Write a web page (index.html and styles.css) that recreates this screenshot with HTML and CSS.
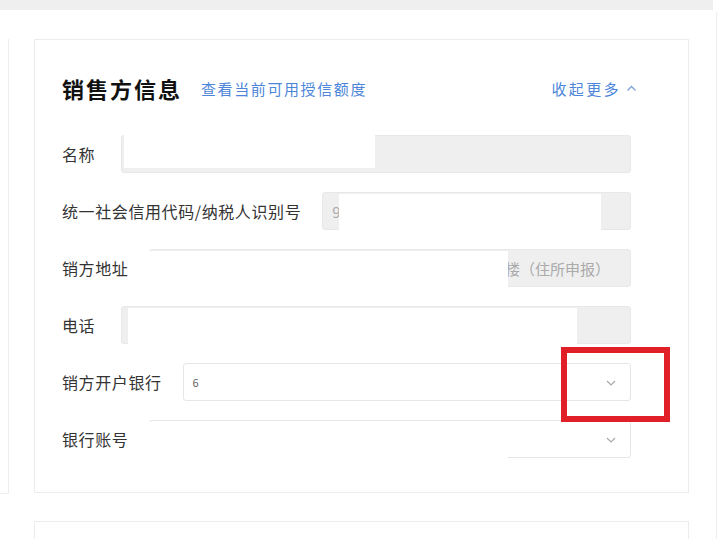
FILE: index.html
```html
<!DOCTYPE html>
<html lang="zh-CN">
<head>
  <meta charset="UTF-8">
  <title>销售方信息</title>
  <link rel="stylesheet" href="styles.css">
</head>
<body>
  <div class="topband"></div>
  <div class="layout">
    <div class="side"></div>

    <div class="main">
      <div class="card">
        <div class="card-header">
          <h2 class="card-title">销售方信息</h2>
          <a class="link" href="#">查看当前可用授信额度</a>
          <a class="link toggle" href="#">收起更多
            <svg width="11" height="7" viewBox="0 0 11 7"><path d="M1.5 5.5 L5.5 1.5 L9.5 5.5" fill="none" stroke="#7f9fd8" stroke-width="1.3"/></svg>
          </a>
        </div>

        <div class="form">
          <div class="form-row short">
            <label>名称</label>
            <div class="field disabled">
              <span class="mask mask-name"></span>
            </div>
          </div>

          <div class="form-row">
            <label>统一社会信用代码/纳税人识别号</label>
            <div class="field disabled">
              <span class="value">9</span>
              <span class="mask mask-tax"></span>
            </div>
          </div>

          <div class="form-row">
            <label>销方地址</label>
            <div class="field disabled end">
              <span class="value">楼（住所申报）</span>
              <span class="mask mask-addr"></span>
            </div>
          </div>

          <div class="form-row short">
            <label>电话</label>
            <div class="field disabled">
              <span class="mask mask-phone"></span>
            </div>
          </div>

          <div class="form-row">
            <label>销方开户银行</label>
            <div class="field select">
              <span class="value dark">6</span>
              <span class="mask mask-bank"></span>
              <svg class="arrow" width="10" height="6" viewBox="0 0 10 6"><path d="M1 1 L5 5 L9 1" fill="none" stroke="#a8a8a8" stroke-width="1.2"/></svg>
            </div>
          </div>

          <div class="form-row">
            <label>银行账号</label>
            <div class="field select">
              <span class="mask mask-account"></span>
              <svg class="arrow" width="10" height="6" viewBox="0 0 10 6"><path d="M1 1 L5 5 L9 1" fill="none" stroke="#a8a8a8" stroke-width="1.2"/></svg>
            </div>
          </div>
        </div>

        <div class="highlight"></div>
      </div>

      <div class="card next"></div>
    </div>

    <div class="rightline"></div>
  </div>
</body>
</html>
```

FILE: styles.css
```css
body {
  margin: 0;
  background: #fff;
  font-family: "Noto Sans CJK SC", "Noto Sans", sans-serif;
  color: #333;
  width: 723px;
  height: 539px;
  overflow: hidden;
}
.topband {
  height: 10px;
  width: 713px;
  background: #efefef;
}
.layout {
  display: flex;
  height: 529px;
}
.side {
  width: 8px;
  height: 454px;
  margin-top: 29px;
  border-right: 1px solid #eee;
  border-bottom: 1px solid #eee;
}
.main {
  width: 655px;
  margin-left: 25px;
  padding-top: 29px;
}
.rightline {
  margin-left: 27px;
  margin-top: 2px;
  border-left: 1px solid #eee;
}
.card {
  position: relative;
  height: 452px;
  border: 1px solid #ececec;
  padding: 0 57px 0 27px;
}
.card.next {
  margin-top: 28px;
  height: 40px;
}
.card-header {
  display: flex;
  align-items: center;
  height: 28px;
  margin-top: 34px;
  margin-right: -6px;
}
.card-title {
  margin: 0;
  font-size: 22px;
  font-weight: bold;
  letter-spacing: 2px;
  color: #111;
}
.link {
  margin-left: 19px;
  font-size: 15px;
  letter-spacing: 1.6px;
  color: #4d86d9;
  text-decoration: none;
}
.toggle {
  margin-left: auto;
  display: flex;
  align-items: center;
  gap: 5px;
  letter-spacing: 2.4px;
}
.form {
  margin-top: 33px;
  display: flex;
  flex-direction: column;
  gap: 19px;
}
.form-row {
  display: flex;
  align-items: center;
  height: 38px;
}
.form-row label {
  font-size: 16px;
  letter-spacing: 0.6px;
  margin-right: 21px;
  white-space: nowrap;
}
.form-row.short label {
  margin-right: 26px;
}
.field {
  position: relative;
  flex: 1;
  height: 36px;
  border: 1px solid #e6e6e6;
  border-radius: 3px;
  display: flex;
  align-items: center;
  padding: 0 20px 0 9px;
  font-size: 15px;
  color: #aaa;
}
.field.disabled {
  background: #efefef;
  border-color: #e8e8e8;
}
.field.end {
  justify-content: flex-end;
}
.field.select {
  background: #fff;
}
.value.dark {
  color: #666;
  font-size: 11px;
}
.arrow {
  position: absolute;
  right: 14px;
  top: 16px;
}
.mask {
  position: absolute;
  background: #fff;
}
.mask-name {
  left: 2px;
  top: -10px;
  width: 251px;
  height: 42px;
}
.mask-tax {
  left: 16px;
  top: 1px;
  width: 262px;
  height: 37px;
}
.mask-addr {
  left: -1px;
  top: 1px;
  width: 359px;
  height: 42px;
}
.mask-phone {
  left: 6px;
  top: 1px;
  width: 449px;
  height: 38px;
}
.mask-bank {
  left: 15px;
  top: 3px;
  width: 360px;
  height: 31px;
}
.mask-account {
  left: -1px;
  top: 1px;
  width: 359px;
  height: 40px;
}
.highlight {
  position: absolute;
  left: 526px;
  top: 307px;
  width: 97px;
  height: 63px;
  border: 6px solid #e01f29;
}
```
